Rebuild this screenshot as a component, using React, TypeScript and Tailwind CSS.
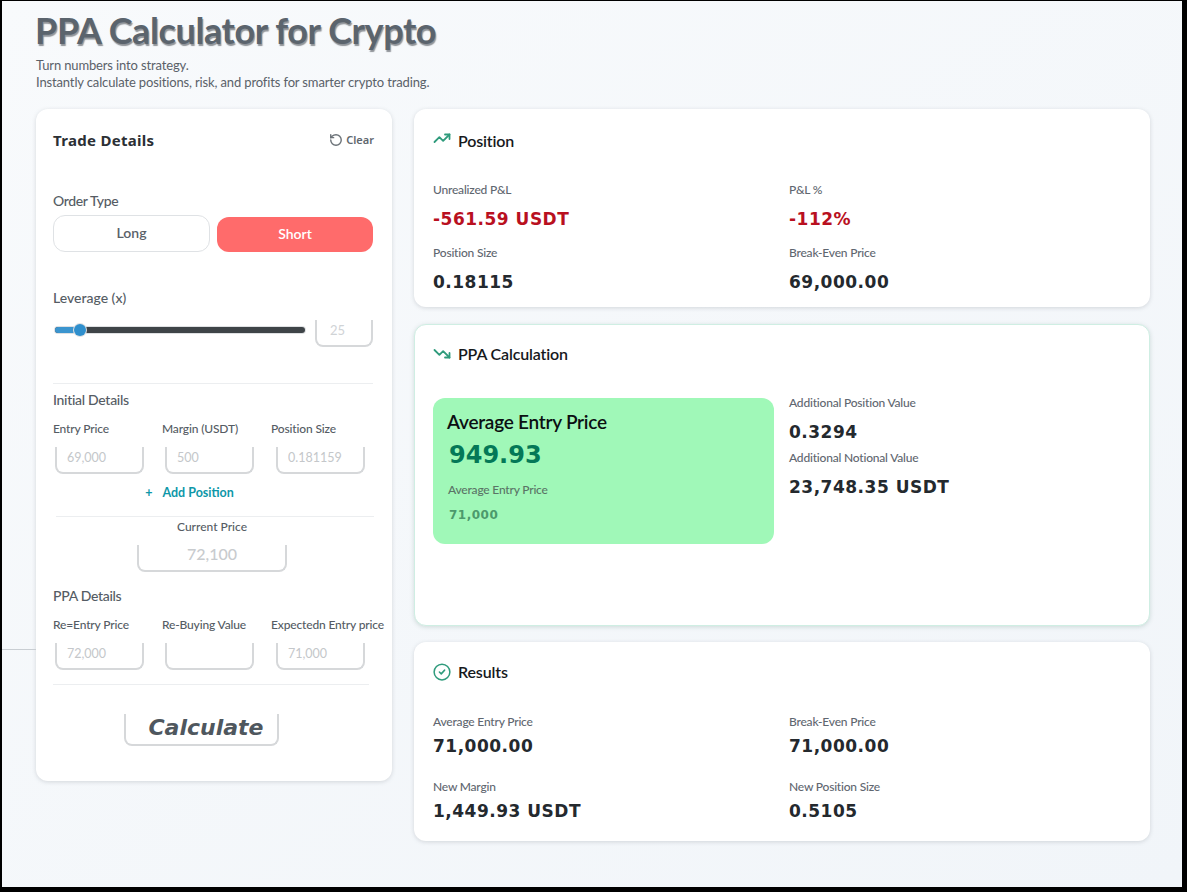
import React from "react";

const HEAD = "font-['Lato','Noto_Sans',sans-serif]";
const VAL = "font-['DejaVu_Sans',sans-serif]";

function Stat({ label, value, color = "text-[#24292e]", gap = "mb-[10px]" }: { label: string; value: string; color?: string; gap?: string }) {
  return (
    <div className="min-w-0">
      <div className={`${HEAD} ${gap} text-[12px] leading-[16px] text-[#5f6770] font-medium tracking-[-0.2px]`}>{label}</div>
      <div className={`${VAL} text-[17px] leading-[22px] font-bold tracking-[0.5px] ${color}`}>{value}</div>
    </div>
  );
}

function Field({ label, placeholder, inset }: { label: string; placeholder?: string; inset: string }) {
  return (
    <div className="flex flex-col">
      <div className={`${HEAD} whitespace-nowrap text-[12px] leading-[16px] text-[#555c64] font-medium tracking-[-0.15px]`}>{label}</div>
      <input
        readOnly
        placeholder={placeholder}
        className={`${HEAD} ${inset} mt-[10px] h-[27px] w-[89px] rounded-b-lg border-x-2 border-b-2 border-[#d6d8da] bg-white pb-[5px] pl-[10px] text-[12.5px] outline-none placeholder:text-[#c4c7ca]`}
      />
    </div>
  );
}

function CardTitle({ icon, children }: { icon: React.ReactNode; children: React.ReactNode }) {
  return (
    <div className="flex items-center gap-[7px]">
      <span className="flex h-[18px] w-[18px] items-center justify-center">{icon}</span>
      <span className={`${HEAD} text-[16px] leading-[22px] font-semibold tracking-[-0.15px] text-[#16191c]`}>{children}</span>
    </div>
  );
}

export default function App() {
  return (
    <div className="h-[892px] w-[1187px] overflow-hidden bg-black pb-[5px] pl-[2px] pt-[1px] pr-[5px]">
      <div className="relative h-full bg-gradient-to-br from-[#f8fafc] to-[#f1f5f9] pl-[34px] pr-[32px] pt-[8px]">
        <div className="absolute left-0 top-[648px] h-px w-[34px] bg-[#c9ced3]" />
        <h1 className={`${HEAD} -ml-px text-[36px] leading-[42px] font-bold tracking-[-0.4px] text-[#5b646d] [text-shadow:1px_2px_1px_rgba(60,66,72,0.55)]`}>
          PPA Calculator for Crypto
        </h1>
        <p className={`${HEAD} mt-[6px] text-[13px] leading-[17px] tracking-[-0.14px] text-[#5a6169]`}>
          Turn numbers into strategy.<br />Instantly calculate positions, risk, and profits for smarter crypto trading.
        </p>

        <div className="mt-[18px] flex items-start gap-[22px]">
          {/* Left card */}
          <div className="h-[672px] w-[356px] shrink-0 rounded-xl bg-white pl-[17px] pr-[18px] pt-[20px] shadow-[0_1px_4px_rgba(90,100,110,0.22)]">
            <div className="flex items-center justify-between">
              <span className="font-['Noto_Sans',sans-serif] text-[15px] leading-[22px] font-bold tracking-[0.3px] text-[#2b3035]">Trade Details</span>
              <span className="flex items-center gap-[3px] font-['Noto_Sans',sans-serif] text-[11px] font-semibold text-[#60676e]">
                <svg width="14" height="14" viewBox="0 0 24 24" fill="none" stroke="#6b7278" strokeWidth="2.4" strokeLinecap="round" strokeLinejoin="round">
                  <path d="M3 12a9 9 0 1 0 9-9 9.75 9.75 0 0 0-6.74 2.74L3 8" />
                  <path d="M3 3v5h5" />
                </svg>
                Clear
              </span>
            </div>

            <div className={`${HEAD} mt-[40px] text-[14px] leading-[20px] font-medium tracking-[-0.35px] text-[#555c64]`}>Order Type</div>
            <div className="mt-[4px] flex items-end gap-[7px]">
              <div className={`${HEAD} flex h-[37px] w-[157px] items-center justify-center rounded-xl border border-[#dfe2e5] bg-white pb-[2px] text-[14px] font-semibold text-[#5a6168]`}>Long</div>
              <div className={`${HEAD} flex h-[35px] w-[156px] items-center justify-center rounded-xl bg-[#ff6b6b] pb-[3px] text-[14px] font-semibold text-white`}>Short</div>
            </div>

            <div className={`${HEAD} mt-[36px] text-[14px] leading-[20px] font-medium text-[#555c64]`}>Leverage (x)</div>
            <div className="mt-[12px] flex items-start">
              <div className="relative ml-[2px] mt-[7px] h-[6px] w-[250px] rounded-full bg-[#3f4448] shadow-[0_0_0_1px_#dfe1e3]">
                <div className="h-full w-[25px] rounded-l-full bg-[#3b95cf]" />
                <div className="absolute left-[19px] top-[-3px] h-[12px] w-[12px] rounded-full bg-[#2f8fcd] shadow-[0_0_0_1px_#dfe1e3]" />
              </div>
              <input
                readOnly
                placeholder="25"
                className={`${HEAD} ml-[10px] h-[27px] w-[58px] rounded-b-lg border-x-2 border-b-2 border-[#d6d8da] bg-white pb-[5px] pl-[13px] text-[13px] outline-none placeholder:text-[#d0d3d6]`}
              />
            </div>

            <div className="mt-[36px] mr-px border-t border-[#eceef0]" />
            <div className={`${HEAD} mt-[7px] text-[14px] leading-[18px] font-medium tracking-[-0.3px] text-[#555c64]`}>Initial Details</div>
            <div className="mt-[12px] grid grid-cols-[109px_109px_1fr]">
              <Field label="Entry Price" placeholder="69,000" inset="ml-[2px]" />
              <Field label="Margin (USDT)" placeholder="500" inset="ml-[3px]" />
              <Field label="Position Size" placeholder="0.181159" inset="ml-[5px]" />
            </div>
            <div className={`${HEAD} mt-[10px] flex items-center justify-center gap-[10px] pr-[48px] text-[12.5px] leading-[18px] font-bold text-[#0e97a8]`}>
              <span>+</span>
              <span>Add Position</span>
            </div>
            <div className="ml-[3px] mt-[14px] border-t border-[#eceef0]" />
            <div className={`${HEAD} mt-[2px] pr-[3px] text-center text-[12px] leading-[16px] font-medium text-[#555c64]`}>Current Price</div>
            <div className="flex justify-center pr-[3px]">
              <input
                readOnly
                placeholder="72,100"
                className={`${HEAD} mt-[10px] h-[27px] w-[150px] rounded-b-lg border-x-2 border-b-2 border-[#d6d8da] bg-white pb-[8px] text-center text-[16px] font-medium outline-none placeholder:text-[#c8cbce]`}
              />
            </div>

            <div className={`${HEAD} mt-[15px] text-[14px] leading-[18px] font-medium tracking-[-0.3px] text-[#555c64]`}>PPA Details</div>
            <div className="mt-[12px] grid grid-cols-[109px_109px_1fr]">
              <Field label="Re=Entry Price" placeholder="72,000" inset="ml-[2px]" />
              <Field label="Re-Buying Value" inset="ml-[3px]" />
              <Field label="Expectedn Entry price" placeholder="71,000" inset="ml-[5px]" />
            </div>
            <div className="mt-[14px] mr-[5px] border-t border-[#eceef0]" />
            <div className="mt-[29px] flex justify-start pl-[71px]">
              <div className={`${VAL} flex h-[32px] w-[155px] items-center justify-center rounded-b-lg border-x-2 border-b-2 border-[#d6d8da] pb-[4px] pl-[9px] text-[22px] font-bold italic text-[#4f575e]`}>Calculate</div>
            </div>
          </div>

          {/* Right column */}
          <div className="flex min-w-0 flex-1 flex-col gap-[16px]">
            <div className="mb-px h-[198px] rounded-xl bg-white px-[19px] pt-[21px] shadow-[0_1px_4px_rgba(90,100,110,0.22)]">
              <CardTitle icon={<svg className="-mt-[4px]" width="18" height="18" viewBox="0 0 24 24" fill="none" stroke="#2f9b7c" strokeWidth="2.4" strokeLinecap="round" strokeLinejoin="round"><path d="M22 6l-8.5 8.5-5-5L2 16" /><path d="M16 6h6v6" /></svg>}>Position</CardTitle>
              <div className="mt-[30px] grid grid-cols-[356px_1fr] gap-y-[15px]">
                <Stat label="Unrealized P&L" value="-561.59 USDT" color="text-[#b9101f]" />
                <Stat label="P&L %" value="-112%" color="text-[#b9101f]" />
                <Stat label="Position Size" value="0.18115" />
                <Stat label="Break-Even Price" value="69,000.00" />
              </div>
            </div>

            <div className="h-[302px] rounded-xl border border-[#cfeee3] bg-white px-[18px] pt-[18px] shadow-[0_1px_4px_rgba(90,130,120,0.25)]">
              <CardTitle icon={<svg className="-mt-[2px]" width="18" height="18" viewBox="0 0 24 24" fill="none" stroke="#2f9b7c" strokeWidth="2.4" strokeLinecap="round" strokeLinejoin="round"><path d="M22 18l-8.5-8.5-5 5L2 8" /><path d="M16 18h6v-6" /></svg>}>PPA Calculation</CardTitle>
              <div className="mt-[33px] flex items-start">
                <div className="h-[146px] w-[341px] shrink-0 rounded-xl bg-[#a0f8b8] pl-[14px] pt-[11px]">
                  <div className={`${HEAD} text-[19px] leading-[26px] font-semibold tracking-[-0.25px] text-[#0b0f12]`}>Average Entry Price</div>
                  <div className={`${VAL} ml-[2px] mt-[2px] text-[24px] leading-[36px] font-bold text-[#047857]`}>949.93</div>
                  <div className={`${HEAD} ml-px mt-[9px] text-[12px] leading-[16px] font-medium tracking-[-0.2px] text-[#5a7466]`}>Average Entry Price</div>
                  <div className={`${VAL} ml-[2px] mt-[9px] text-[12px] leading-[16px] font-bold tracking-[0.5px] text-[#4c9a6c]`}>71,000</div>
                </div>
                <div className="-mt-[3px] ml-[15px] flex flex-col gap-[7px]">
                  <Stat label="Additional Position Value" value="0.3294" />
                  <Stat label="Additional Notional Value" value="23,748.35 USDT" />
                </div>
              </div>
            </div>

            <div className="h-[199px] rounded-xl bg-white px-[19px] pt-[19px] shadow-[0_1px_4px_rgba(90,100,110,0.22)]">
              <CardTitle icon={<svg width="18" height="18" viewBox="0 0 24 24" fill="none" stroke="#2f9b7c" strokeWidth="2" strokeLinecap="round" strokeLinejoin="round"><circle cx="12" cy="12" r="10.5" /><path d="M8.5 12l2.5 2.5 4.5-5" /></svg>}>Results</CardTitle>
              <div className="mt-[31px] grid grid-cols-[356px_1fr] gap-y-[22px]">
                <Stat label="Average Entry Price" value="71,000.00" gap="mb-[5px]" />
                <Stat label="Break-Even Price" value="71,000.00" gap="mb-[5px]" />
                <Stat label="New Margin" value="1,449.93 USDT" gap="mb-[5px]" />
                <Stat label="New Position Size" value="0.5105" gap="mb-[5px]" />
              </div>
            </div>
          </div>
        </div>
      </div>
    </div>
  );
}
